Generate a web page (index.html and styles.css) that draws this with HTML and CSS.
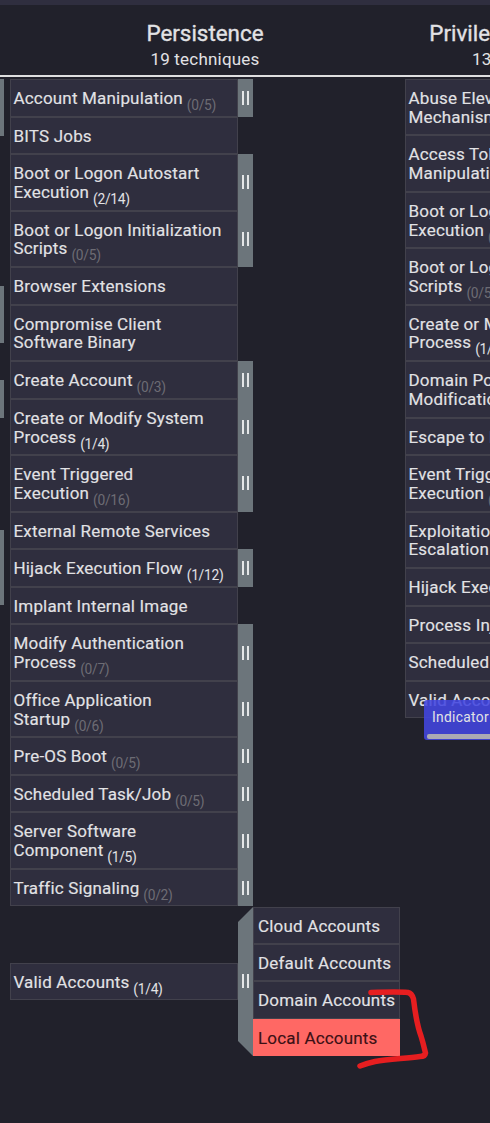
FILE: index.html
```html
<!DOCTYPE html>
<html lang="en">
<head>
<meta charset="utf-8">
<title>Technique matrix</title>
<link rel="stylesheet" href="styles.css">
</head>
<body>
<div class="page">
  <div class="topbar"></div>
  <header class="heads">
    <div class="head head-main"><div class="tactic">Persistence</div><div class="count">19 techniques</div></div>
    <div class="head head-next"><div class="tactic">Privilege Escalation</div><div class="count">13 techniques</div></div>
  </header>
  <main class="matrix">
    <div class="prev">
      <i class="stub d"></i><i class="gap"></i><i class="stub d"></i><i class="gap s"></i><i class="stub s"></i><i class="gap t"></i><i class="stub u"></i>
    </div>
    <div class="column">
      <div class="row"><div class="cell"><p>Account Manipulation <sub>(0/5)</sub></p></div><div class="side"><i></i></div></div>
      <div class="row"><div class="cell"><p>BITS Jobs</p></div></div>
      <div class="row two"><div class="cell"><p>Boot or Logon Autostart<br>Execution <sub class="on">(2/14)</sub></p></div><div class="side"><i></i></div></div>
      <div class="row two"><div class="cell"><p>Boot or Logon Initialization<br>Scripts <sub>(0/5)</sub></p></div><div class="side"><i></i></div></div>
      <div class="row"><div class="cell"><p>Browser Extensions</p></div></div>
      <div class="row two"><div class="cell"><p>Compromise Client<br>Software Binary</p></div></div>
      <div class="row"><div class="cell"><p>Create Account <sub>(0/3)</sub></p></div><div class="side"><i></i></div></div>
      <div class="row two"><div class="cell"><p>Create or Modify System<br>Process <sub class="on">(1/4)</sub></p></div><div class="side"><i></i></div></div>
      <div class="row two"><div class="cell"><p>Event Triggered<br>Execution <sub>(0/16)</sub></p></div><div class="side"><i></i></div></div>
      <div class="row"><div class="cell"><p>External Remote Services</p></div></div>
      <div class="row"><div class="cell"><p>Hijack Execution Flow <sub class="on">(1/12)</sub></p></div><div class="side"><i></i></div></div>
      <div class="row"><div class="cell"><p>Implant Internal Image</p></div></div>
      <div class="row two"><div class="cell"><p>Modify Authentication<br>Process <sub>(0/7)</sub></p></div><div class="side"><i></i></div></div>
      <div class="row two"><div class="cell"><p>Office Application<br>Startup <sub>(0/6)</sub></p></div><div class="side"><i></i></div></div>
      <div class="row"><div class="cell"><p>Pre-OS Boot <sub>(0/5)</sub></p></div><div class="side"><i></i></div></div>
      <div class="row"><div class="cell"><p>Scheduled Task/Job <sub>(0/5)</sub></p></div><div class="side"><i></i></div></div>
      <div class="row two"><div class="cell"><p>Server Software<br>Component <sub class="on">(1/5)</sub></p></div><div class="side"><i></i></div></div>
      <div class="row"><div class="cell"><p>Traffic Signaling <sub>(0/2)</sub></p></div><div class="side"><i></i></div></div>
      <div class="row open">
        <div class="cell"><p>Valid Accounts <sub class="on">(1/4)</sub></p></div>
        <div class="side wedge"><i></i></div>
        <div class="subs">
          <div class="cell">Cloud Accounts</div>
          <div class="cell">Default Accounts</div>
          <div class="cell">Domain Accounts</div>
          <div class="cell hot">Local Accounts</div>
        </div>
      </div>
    </div>
    <div class="column next">
      <div class="row two"><div class="cell"><p>Abuse Elevation Control<br>Mechanism</p></div></div>
      <div class="row two"><div class="cell"><p>Access Token<br>Manipulation</p></div></div>
      <div class="row two"><div class="cell"><p>Boot or Logon Autostart<br>Execution <sub>(2/14)</sub></p></div></div>
      <div class="row two"><div class="cell"><p>Boot or Logon Initialization<br>Scripts <sub>(0/5)</sub></p></div></div>
      <div class="row two"><div class="cell"><p>Create or Modify System<br>Process <sub class="on">(1/4)</sub></p></div></div>
      <div class="row two"><div class="cell"><p>Domain Policy<br>Modification</p></div></div>
      <div class="row"><div class="cell"><p>Escape to Host</p></div></div>
      <div class="row two"><div class="cell"><p>Event Triggered<br>Execution <sub>(0/16)</sub></p></div></div>
      <div class="row two"><div class="cell"><p>Exploitation for Privilege<br>Escalation</p></div></div>
      <div class="row"><div class="cell"><p>Hijack Execution Flow</p></div></div>
      <div class="row"><div class="cell"><p>Process Injection</p></div></div>
      <div class="row"><div class="cell"><p>Scheduled Task/Job</p></div></div>
      <div class="row"><div class="cell"><p>Valid Accounts</p></div></div>
    </div>
  </main>
  <div class="tooltip"><span>Indicator</span><div class="scroll"></div></div>
  <svg class="mark" width="82" height="86" viewBox="0 0 82 86"><path d="M16 8.500 C28 8.200 42 7.500 53 8.500 Q57 9.500 58.500 15 C60 28 62 41 66 52 C68.500 60 69.500 65 70.500 69 Q70 72.500 65 72.500 C51 74.500 34 75 20 77.500 Q11 79.500 5 82"/></svg>
</div>
</body>
</html>
```
FILE: styles.css
```css
* { box-sizing: border-box; }
body { margin: 0; background: #21212b; color: #e2e2e5; font-family: Roboto, "Liberation Sans", sans-serif; }
.page { position: relative; width: 490px; height: 1123px; overflow: hidden; }
.topbar { height: 5px; background: #2f2e3f; }
.heads { display: flex; height: 71.500px; border-bottom: 2px solid #dededf; padding-left: 10px; }
.head { flex: none; width: 390px; text-align: center; padding-top: 16px; white-space: nowrap; }
.head-main { margin-right: 5px; }
.head-next { width: 243px; }
.tactic { font-size: 22.400px; line-height: 24px; -webkit-text-stroke: .35px currentColor; }
.count { font-size: 17px; line-height: 20px; margin-top: 4px; letter-spacing: .2px; }
.matrix { display: flex; padding-top: 2.500px; }
.prev { flex: none; width: 4px; margin-right: 6px; }
.prev i { display: block; height: 37.600px; }
.prev .stub { background: #6c757b; }
.prev .d { height: 57px; }
.prev .gap { height: 150px; }
.prev .gap.s { height: 37px; }
.prev .gap.t { height: 112.500px; }
.prev .u { height: 75px; }
.column { flex: none; width: 395px; }
.row { display: flex; height: 37.620px; }
.two { height: 56.430px; }
.cell { flex: none; width: 228px; height: 100%; display: flex; align-items: center; background: #2f2e3e; border: 1px solid #42414c; padding: 1.200px 0 0 2.500px; font-size: 17px; line-height: 18.800px; letter-spacing: .18px; white-space: nowrap; -webkit-text-stroke: .15px currentColor; }
.cell p { margin: 0; }
sub { font-size: 13.800px; line-height: 0; letter-spacing: -.3px; vertical-align: -6px; color: #6d6c74; margin-left: -.500px; -webkit-text-stroke: 0; }
sub.on { color: #e2e2e5; }
.side { flex: none; width: 15px; background: #6c757b; display: flex; align-items: center; justify-content: center; }
.side i { width: 7px; height: 14px; border: solid #e4e6e7; border-width: 0 2px; }
.open { height: 150px; align-items: center; }
.open > .cell { height: 37.600px; }
.wedge { height: 149px; clip-path: polygon(0 15px, 100% 0, 100% 100%, 0 134px); }
.subs { width: 147px; }
.subs .cell { width: 147px; height: 37.400px; padding-left: 4px; }
.subs .hot { background: #ff6864; border-color: #ff6864; color: #3b1015; }
.tooltip { position: absolute; left: 424px; top: 700px; width: 100px; height: 40px; padding: 8px 0 0 8px; border-radius: 3px; background: rgba(66, 70, 224, .88); font-size: 13.800px; line-height: 19px; letter-spacing: .3px; }
.scroll { height: 5px; margin: 7px 0 0 -5px; border-radius: 2px; background: #aaa9b3; }
.mark { position: absolute; left: 355px; top: 984px; fill: none; stroke: #e61e20; stroke-width: 5.500; stroke-linecap: round; stroke-linejoin: round; }
```
